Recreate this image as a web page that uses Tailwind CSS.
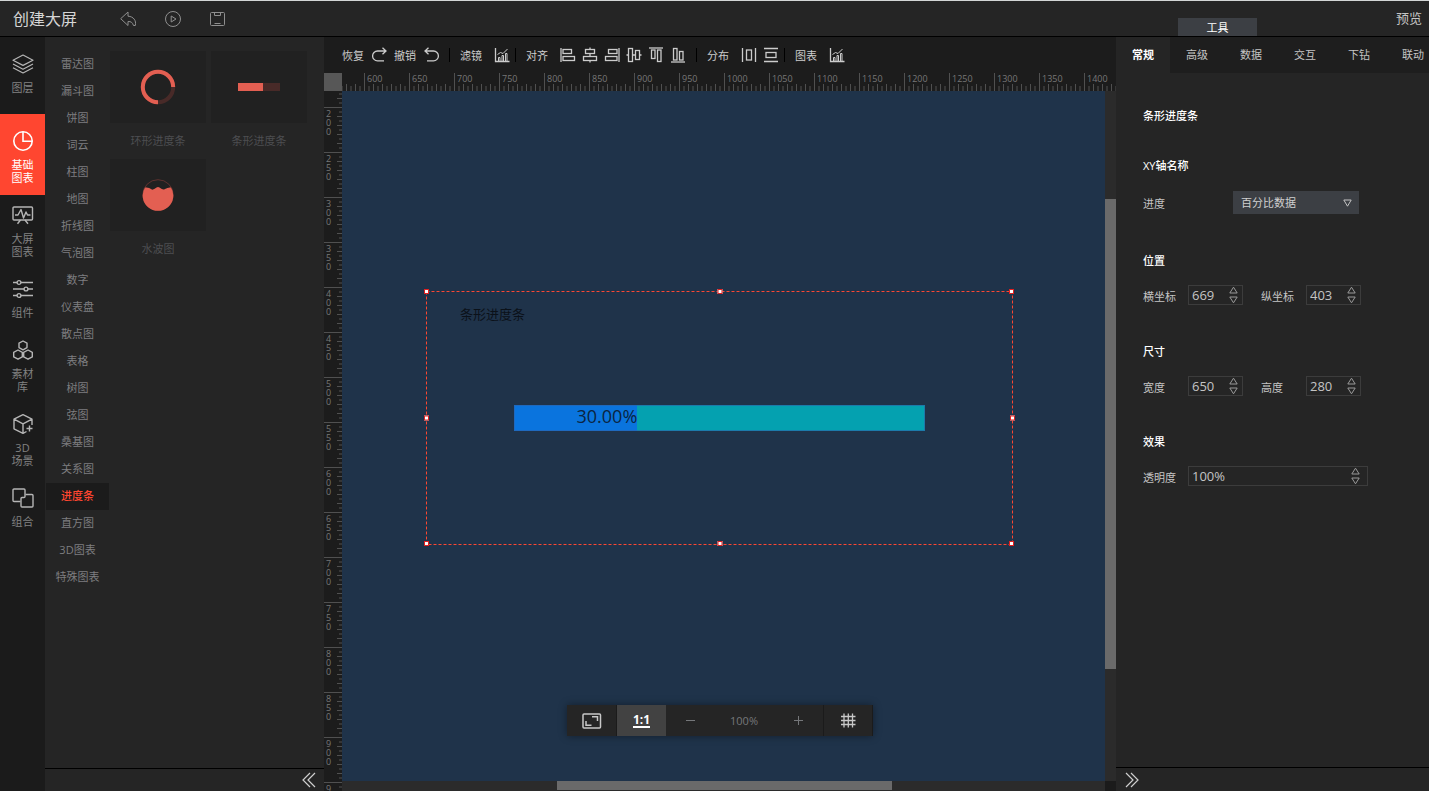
<!DOCTYPE html>
<html lang="zh-CN">
<head>
    <meta charset="UTF-8">
    <meta name="viewport" content="width=device-width, initial-scale=1.0">
    <title>创建大屏</title>
    <script src="https://cdn.jsdelivr.net/npm/@tailwindcss/browser@4"></script>
</head>
<body class="h-screen flex flex-col overflow-hidden bg-[#252525] border-t border-[#d3d6d6] text-[11px] leading-[13px] text-[#c4c4c4] font-['Open_Sans','Noto_Sans_CJK_SC',sans-serif]">
    <!-- Header -->
    <header class="h-9 shrink-0 flex items-center border-b border-black">
        <h1 class="pl-[13px] text-base leading-5 text-[#d6d6d6]">创建大屏</h1>
        <div class="flex items-center gap-[29px] pl-[43px] text-[#8f8f8f]">
            <button type="button" aria-label="返回">
                <svg class="w-4 h-4" viewBox="0 0 16 16" fill="none" stroke="currentColor" stroke-linejoin="round"><path d="M8 1 L.7 7.7 L8 14.5 V10.5 C11 10.3 12.5 11.5 13.5 14.5 H15.3 C16.5 9.5 13.5 5.5 8 5.2 Z"/></svg>
            </button>
            <button type="button" aria-label="播放">
                <svg class="w-4 h-4" viewBox="0 0 16 16" fill="none" stroke="currentColor"><circle cx="8" cy="8" r="7.5"/><path d="M6.2 5 V11 L11 8 Z" stroke-linejoin="round"/></svg>
            </button>
            <button type="button" aria-label="保存">
                <svg class="w-4 h-4" viewBox="0 0 16 16" fill="none" stroke="currentColor"><rect x=".5" y="1.5" width="14" height="13" rx="1"/><path d="M4.5 1.5 V4.5 H10.5 V1.5 M4.5 12.5 H10.5"/></svg>
            </button>
        </div>
        <button type="button" class="ml-auto mr-[139px] self-end w-[79px] h-[18px] bg-[#3c3f44] text-white">工具</button>
        <a href="#" class="pr-[7px] text-[13px]">预览</a>
    </header>

    <div class="flex-1 min-h-0 flex">
        <!-- Category rail -->
        <nav class="w-[45px] shrink-0 bg-[#1b1b1b] text-center text-[#818181]">
            <a href="#" class="flex flex-col items-center gap-[7px] pt-[17px] pb-5">
                <svg class="w-[22px] h-5 text-[#b5b5b5]" viewBox="0 0 22 20" fill="none" stroke="currentColor" stroke-width="1.2" stroke-linejoin="round"><path d="M11 1 L21 6.2 L11 11.4 L1 6.2 Z M1 10 L11 15.2 L21 10 M1 13.8 L11 19 L21 13.8"/></svg>
                <span>图层</span>
            </a>
            <a href="#" class="flex flex-col items-center gap-[7px] pt-[17px] pb-[11px] bg-[#ff4630] text-white">
                <svg class="w-[22px] h-5" viewBox="0 0 22 20" fill="none" stroke="currentColor" stroke-width="1.6"><circle cx="11" cy="10" r="9.2"/><path d="M11 .7 V10.2 H20.3"/></svg>
                <span>基础<br>图表</span>
            </a>
            <a href="#" class="flex flex-col items-center gap-[7px] pt-[10px] pb-[11px]">
                <svg class="w-[22px] h-5 text-[#b5b5b5]" viewBox="0 0 22 20" fill="none" stroke="currentColor" stroke-width="1.4" stroke-linejoin="round"><rect x="1" y="2" width="19.5" height="13" rx="1"/><path d="M3 10 H6 L9 4.5 L11.5 13 L14 7 L15.5 10 H18.5 M8.5 15 L5.5 18.8 M13 15 L16 18.8"/></svg>
                <span>大屏<br>图表</span>
            </a>
            <a href="#" class="flex flex-col items-center gap-[7px] pt-[10px] pb-[11px]">
                <svg class="w-[22px] h-5 text-[#b5b5b5]" viewBox="0 0 22 20" fill="none" stroke="currentColor" stroke-width="1.4"><path d="M1 3.5 H5 M9 3.5 H21 M1 10 H12 M16 10 H21 M1 16.5 H5 M9 16.5 H21"/><circle cx="7" cy="3.5" r="1.9"/><circle cx="14" cy="10" r="1.9"/><circle cx="7" cy="16.5" r="1.9"/></svg>
                <span>组件</span>
            </a>
            <a href="#" class="flex flex-col items-center gap-[7px] pt-[10px] pb-[11px]">
                <svg class="w-[22px] h-5 text-[#b5b5b5]" viewBox="0 0 22 20" fill="none" stroke="currentColor" stroke-width="1.4" stroke-linejoin="round"><path d="M11 1 L15 3.2 V7.6 L11 9.8 L7 7.6 V3.2 Z M6 10 L10.3 12.3 V16.9 L6 19.2 L1.7 16.9 V12.3 Z M16 10 L20.3 12.3 V16.9 L16 19.2 L11.7 16.9 V12.3 Z"/></svg>
                <span>素材<br>库</span>
            </a>
            <a href="#" class="flex flex-col items-center gap-[7px] pt-[10px] pb-[11px]">
                <svg class="w-[22px] h-5 text-[#b5b5b5]" viewBox="0 0 22 20" fill="none" stroke="currentColor" stroke-width="1.4" stroke-linejoin="round"><path d="M20 11 V5.2 L11 .7 L2 5.2 V14.8 L11 19.3 L14.5 17.5 M2 5.2 L11 9.8 L20 5.2 M11 9.8 V19.3 M17.5 11.5 V17.5 M14.5 14.5 H20.5"/></svg>
                <span>3D<br>场景</span>
            </a>
            <a href="#" class="flex flex-col items-center gap-[7px] pt-[10px] pb-[11px]">
                <svg class="w-[22px] h-5 text-[#b5b5b5]" viewBox="0 0 22 20" fill="none" stroke="currentColor" stroke-width="1.4"><path d="M8.5 13.5 H2 a1 1 0 0 1 -1 -1 V2 a1 1 0 0 1 1 -1 H12 a1 1 0 0 1 1 1 V8.5 a1 1 0 0 1 -1 1 H11"/><path d="M13.5 6.5 H20 a1 1 0 0 1 1 1 V18 a1 1 0 0 1 -1 1 H10 a1 1 0 0 1 -1 -1 V10.5 a1 1 0 0 1 1 -1 H11"/></svg>
                <span>组合</span>
            </a>
        </nav>

        <!-- Chart library -->
        <section class="w-[279px] shrink-0 flex flex-col">
            <div class="flex-1 min-h-0 flex pt-[14px] pl-px">
                <nav id="chart-types" class="w-[63px] shrink-0 text-center text-[#7e7e80]"></nav>
                <div class="grid grid-cols-[96px_96px] auto-rows-[108px] content-start gap-x-[5px] pl-px text-center text-[#4d4e51]">
                    <button type="button" class="flex flex-col">
                        <span class="w-full h-[72px] flex items-center justify-center bg-[#212121]">
                            <svg class="w-9 h-9" viewBox="0 0 36 36" fill="none" stroke-width="4"><circle cx="18" cy="18" r="15.2" stroke="#482a28"/><path d="M18 33.2 A15.2 15.2 0 1 1 33.2 18" stroke="#e35f52"/></svg>
                        </span>
                        <span class="w-full h-9 leading-9">环形进度条</span>
                    </button>
                    <button type="button" class="flex flex-col">
                        <span class="w-full h-[72px] flex items-center justify-center bg-[#212121]">
                            <svg class="w-[42px] h-2" viewBox="0 0 42 8"><path d="M0 0 H42 V8 H0 Z" fill="#482a28"/><path d="M0 0 H25 V8 H0 Z" fill="#e35f52"/></svg>
                        </span>
                        <span class="w-full h-9 leading-9">条形进度条</span>
                    </button>
                    <button type="button" class="flex flex-col">
                        <span class="w-full h-[72px] flex items-center justify-center bg-[#212121]">
                            <svg class="w-8 h-8" viewBox="0 0 32 32"><circle cx="16" cy="16" r="15.3" fill="none" stroke="#7a3a35" stroke-width=".7"/><path d="M3 9 Q7 14 12 10 H21 Q25 14 29 9 L28 14 H4 Z" fill="#7f3d38"/><path d="M3 8.5 Q7 8 9 10 Q11 11.5 13 9.5 Q16 6.5 19 9.5 Q21 11.5 23 10 Q26 8 29 8.5 A15.3 15.3 0 1 1 3 8.5 Z" fill="#e35f52"/></svg>
                        </span>
                        <span class="w-full h-9 leading-9">水波图</span>
                    </button>
                </div>
            </div>
            <footer class="h-[23px] shrink-0 flex items-center justify-end border-t border-black pr-2">
                <button type="button" aria-label="收起">
                    <svg class="w-[14px] h-4" viewBox="0 0 14 16" fill="none" stroke="#cfcfcf" stroke-width="1.2"><path d="M8 1 L1 8 L8 15 M13 1 L6 8 L13 15"/></svg>
                </button>
            </footer>
        </section>

        <!-- Editor -->
        <main class="relative flex-1 min-w-0 flex flex-col">
            <div class="h-9 shrink-0 flex items-center bg-[#1c1c1c] pl-[18px] text-[#cccccc]">
                <button type="button" class="flex items-center gap-2">恢复
                    <svg class="w-4 h-4" viewBox="0 0 16 16" fill="none" stroke="currentColor" stroke-width="1.3"><path d="M10.5 .8 L14 4 L10.5 7.2 M14 4 H5.5 A4.8 4.8 0 0 0 5.5 13.8 H12"/></svg>
                </button>
                <button type="button" class="flex items-center gap-2 ml-1.5">撤销
                    <svg class="w-4 h-4" viewBox="0 0 16 16" fill="none" stroke="currentColor" stroke-width="1.3"><path d="M4.5 .8 L1 4 L4.5 7.2 M1 4 H9.5 A4.8 4.8 0 0 1 9.5 13.8 H3"/></svg>
                </button>
                <span class="w-px h-[14px] ml-[9px] mr-[10px] bg-black"></span>
                <button type="button" class="flex items-center gap-3">滤镜
                    <svg class="w-4 h-4" viewBox="0 0 16 16" fill="none" stroke="currentColor"><path d="M1.5 1 V14.5 H15.5" stroke-width="1.3"/><path d="M4.5 14 V10.5 H6 V14 M8 14 V8.5 H9.5 V14 M11.5 14 V6.5 H13 V14 M3.5 7.5 L6.5 5.5 L9 6.5 L13.5 2"/></svg>
                </button>
                <span class="w-px h-[14px] ml-[5px] mr-[10px] bg-black"></span>
                <span>对齐</span>
                <div class="flex items-center gap-1.5 pl-3">
                    <button type="button" aria-label="左对齐">
                        <svg class="w-4 h-4" viewBox="0 0 16 16" fill="none" stroke="currentColor" stroke-width="1.3"><path d="M1 1 V15"/><rect x="3" y="2.5" width="8.5" height="4"/><rect x="3" y="9.5" width="11.5" height="4"/></svg>
                    </button>
                    <button type="button" aria-label="水平居中">
                        <svg class="w-4 h-4" viewBox="0 0 16 16" fill="none" stroke="currentColor" stroke-width="1.3"><path d="M8 .5 V2.5 M8 6.5 V9.5 M8 13.5 V15.5"/><rect x="3.5" y="2.5" width="9" height="4"/><rect x="1.5" y="9.5" width="13" height="4"/></svg>
                    </button>
                    <button type="button" aria-label="右对齐">
                        <svg class="w-4 h-4" viewBox="0 0 16 16" fill="none" stroke="currentColor" stroke-width="1.3"><path d="M15 1 V15"/><rect x="4.5" y="2.5" width="8.5" height="4"/><rect x="1.5" y="9.5" width="11.5" height="4"/></svg>
                    </button>
                    <button type="button" aria-label="垂直居中">
                        <svg class="w-4 h-4" viewBox="0 0 16 16" fill="none" stroke="currentColor" stroke-width="1.3"><path d="M.5 8 H2.5 M6.5 8 H9.5 M13.5 8 H15.5"/><rect x="2.5" y="1.5" width="4" height="13"/><rect x="9.5" y="3.5" width="4" height="9"/></svg>
                    </button>
                    <button type="button" aria-label="顶对齐">
                        <svg class="w-4 h-4" viewBox="0 0 16 16" fill="none" stroke="currentColor" stroke-width="1.3"><path d="M1 1 H15"/><rect x="3.5" y="3" width="3.5" height="8.5"/><rect x="9.5" y="3" width="3.5" height="11.5"/></svg>
                    </button>
                    <button type="button" aria-label="底对齐">
                        <svg class="w-4 h-4" viewBox="0 0 16 16" fill="none" stroke="currentColor" stroke-width="1.3"><path d="M1 15 H15"/><rect x="3.5" y="1.5" width="3.5" height="11.5"/><rect x="9.5" y="4.5" width="3.5" height="8.5"/></svg>
                    </button>
                </div>
                <span class="w-px h-[14px] mx-[10px] bg-black"></span>
                <span>分布</span>
                <div class="flex items-center gap-1.5 pl-3">
                    <button type="button" aria-label="水平分布">
                        <svg class="w-4 h-4" viewBox="0 0 16 16" fill="none" stroke="currentColor" stroke-width="1.3"><path d="M1.5 1 V15 M14.5 1 V15"/><rect x="5.5" y="3" width="5" height="10"/></svg>
                    </button>
                    <button type="button" aria-label="垂直分布">
                        <svg class="w-4 h-4" viewBox="0 0 16 16" fill="none" stroke="currentColor" stroke-width="1.3"><path d="M1 1.5 H15 M1 14.5 H15"/><rect x="3" y="5.5" width="10" height="5"/></svg>
                    </button>
                </div>
                <span class="w-px h-[14px] ml-[5px] mr-[10px] bg-black"></span>
                <button type="button" class="flex items-center gap-3">图表
                    <svg class="w-4 h-4" viewBox="0 0 16 16" fill="none" stroke="currentColor"><path d="M1.5 1 V14.5 H15.5" stroke-width="1.3"/><path d="M4.5 14 V10.5 H6 V14 M8 14 V8.5 H9.5 V14 M11.5 14 V6.5 H13 V14 M3.5 7.5 L6.5 5.5 L9 6.5 L13.5 2"/></svg>
                </button>
            </div>

            <!-- Horizontal ruler -->
            <div class="h-[18px] shrink-0 flex bg-[#1c1c1c]">
                <div class="w-[18px] shrink-0 bg-[#575757]"></div>
                <div class="flex-1 min-w-0 overflow-hidden">
                    <div id="ruler-x" class="flex -ml-[23px] text-[9px] leading-[11px] text-[#777777]"></div>
                </div>
            </div>

            <div class="flex-1 min-h-0 flex">
                <!-- Vertical ruler -->
                <div class="w-[18px] shrink-0 overflow-hidden bg-[#1c1c1c]">
                    <div id="ruler-y" class="-mt-[29px] text-[9px] leading-[9px] text-[#777777]"></div>
                </div>

                <div class="flex-1 min-w-0 flex flex-col">
                    <div class="flex-1 min-h-0 flex">
                        <div class="relative flex-1 bg-[#1f334a] overflow-hidden">
                            <div class="absolute left-[84px] top-[200px] w-[587px] h-[254px]">
                                <svg class="absolute inset-0 w-full h-full" viewBox="0 0 587 254" fill="none"><rect x=".5" y=".5" width="586" height="253" stroke="#fb4732" stroke-dasharray="3 2"/></svg>
                                <p class="absolute left-[34px] top-4 text-[13px] leading-[15px] text-[#0b1119]">条形进度条</p>
                                <div class="absolute left-[88px] top-[114px] w-[411px] h-[26px] flex bg-[#04a1b0] outline -outline-offset-1 outline-[#2d62a8]/60">
                                    <div class="h-full bg-[#0a74de] text-right text-lg leading-[22px] text-[#0b2542]" style="width: 30%">30.00%</div>
                                </div>
                                <div id="handles"></div>
                            </div>
                        </div>
                        <div class="w-[11px] shrink-0 bg-[#2b2b2b] pt-[108px]">
                            <div class="h-[470px] bg-[#6a6a6a]"></div>
                        </div>
                    </div>
                    <div class="h-[10px] shrink-0 flex bg-[#1b1b1b]">
                        <div class="flex-1 bg-[#2b2b2b] pl-[215px]">
                            <div class="w-[335px] h-[9px] bg-[#6a6a6a]"></div>
                        </div>
                        <div class="w-[11px] shrink-0"></div>
                    </div>
                </div>
            </div>

            <!-- Zoom bar -->
            <div class="absolute bottom-[55px] left-1/2 -translate-x-1/2 flex h-[31px] bg-[#252525] text-[#75777a] shadow-[0_0_8px_rgba(0,0,0,0.4)]">
                <button type="button" class="w-[50px] flex items-center justify-center border-r border-[#1b1b1b]" aria-label="适应屏幕">
                    <svg class="w-5 h-4" viewBox="0 0 20 16" fill="none" stroke="#c8c8c8" stroke-width="1.5"><rect x="1" y="1" width="17.5" height="14" rx="1"/><path d="M10 3.7 H15.5 V8 M4 8 V12.3 H9.5"/></svg>
                </button>
                <button type="button" class="w-[49px] flex items-center justify-center bg-[#424242] text-white">
                    <span class="border-b-2 border-white text-xs leading-3 font-bold">1:1</span>
                </button>
                <button type="button" class="w-12 flex items-center justify-center" aria-label="缩小">
                    <svg class="w-[9px] h-[9px]" viewBox="0 0 9 9" stroke="currentColor"><path d="M0 4.5 H9"/></svg>
                </button>
                <span class="w-[60px] leading-[31px] text-center">100%</span>
                <button type="button" class="w-[50px] flex items-center justify-center border-r border-[#1b1b1b]" aria-label="放大">
                    <svg class="w-[9px] h-[9px]" viewBox="0 0 9 9" stroke="currentColor"><path d="M0 4.5 H9 M4.5 0 V9"/></svg>
                </button>
                <button type="button" class="w-[49px] flex items-center justify-center border-r border-[#1b1b1b]" aria-label="网格">
                    <svg class="w-4 h-4" viewBox="0 0 16 16" stroke="#c8c8c8" stroke-width="1.3"><path d="M1 3.5 H15.5 M1 7.5 H15.5 M1 11.5 H15.5 M4 .5 V14.5 M8.3 .5 V14.5 M12.5 .5 V14.5"/></svg>
                </button>
            </div>
        </main>

        <!-- Properties -->
        <aside class="w-[313px] shrink-0 flex flex-col">
            <div class="h-9 shrink-0 flex overflow-hidden bg-[#1e1e1e]">
                <button type="button" class="w-[54px] shrink-0 pb-0.5 bg-[#252525] font-bold text-white">常规</button>
                <button type="button" class="w-[54px] shrink-0 pb-0.5">高级</button>
                <button type="button" class="w-[54px] shrink-0 pb-0.5">数据</button>
                <button type="button" class="w-[54px] shrink-0 pb-0.5">交互</button>
                <button type="button" class="w-[54px] shrink-0 pb-0.5">下钻</button>
                <button type="button" class="w-[54px] shrink-0 pb-0.5">联动</button>
            </div>

            <form class="flex-1 min-h-0 pl-[27px] pt-9">
                <h2 class="font-medium text-white">条形进度条</h2>

                <h2 class="mt-[37px] font-medium text-white">XY轴名称</h2>
                <div class="mt-[18px] h-6 flex items-center">
                    <label for="progress" class="w-[90px] pt-0.5">进度</label>
                    <div class="relative">
                        <select id="progress" class="appearance-none w-[126px] h-[23px] px-2 bg-[#3c3f44] text-[#d0d0d0]">
                            <option>百分比数据</option>
                        </select>
                        <svg class="absolute right-[7px] top-2 w-[9px] h-2 pointer-events-none" viewBox="0 0 9 8" fill="none" stroke="#c4c4c4"><path d="M.8 1 H8.2 L4.5 7.2 Z"/></svg>
                    </div>
                </div>

                <h2 class="mt-10 font-medium text-white">位置</h2>
                <div class="mt-[18px] h-5 flex items-center">
                    <label for="pos-x" class="w-[45px] pt-0.5">横坐标</label>
                    <div class="stepper relative w-[55px]"><input id="pos-x" type="text" value="669" class="w-full h-5 px-[3px] border border-[#3c3c3c] text-[13px]"></div>
                    <label for="pos-y" class="w-[45px] ml-[18px] pt-0.5">纵坐标</label>
                    <div class="stepper relative w-[55px]"><input id="pos-y" type="text" value="403" class="w-full h-5 px-[3px] border border-[#3c3c3c] text-[13px]"></div>
                </div>

                <h2 class="mt-10 font-medium text-white">尺寸</h2>
                <div class="mt-[18px] h-5 flex items-center">
                    <label for="width" class="w-[45px] pt-0.5">宽度</label>
                    <div class="stepper relative w-[55px]"><input id="width" type="text" value="650" class="w-full h-5 px-[3px] border border-[#3c3c3c] text-[13px]"></div>
                    <label for="height" class="w-[45px] ml-[18px] pt-0.5">高度</label>
                    <div class="stepper relative w-[55px]"><input id="height" type="text" value="280" class="w-full h-5 px-[3px] border border-[#3c3c3c] text-[13px]"></div>
                </div>

                <h2 class="mt-[39px] font-medium text-white">效果</h2>
                <div class="mt-[18px] h-5 flex items-center">
                    <label for="opacity" class="w-[45px] pt-0.5">透明度</label>
                    <div class="stepper relative w-[180px]"><input id="opacity" type="text" value="100%" class="w-full h-5 px-[3px] border border-[#3c3c3c] text-[13px]"></div>
                </div>
            </form>

            <footer class="h-6 shrink-0 flex items-center border-t border-black pl-[9px]">
                <button type="button" aria-label="收起">
                    <svg class="w-[14px] h-4" viewBox="0 0 14 16" fill="none" stroke="#cfcfcf" stroke-width="1.2"><path d="M1 1 L8 8 L1 15 M6 1 L13 8 L6 15"/></svg>
                </button>
            </footer>
        </aside>
    </div>

    <script>
        // Chart type menu
        const chartTypes = ['雷达图', '漏斗图', '饼图', '词云', '柱图', '地图', '折线图', '气泡图', '数字', '仪表盘', '散点图', '表格', '树图', '弦图', '桑基图', '关系图', '进度条', '直方图', '3D图表', '特殊图表'];
        document.getElementById('chart-types').innerHTML = chartTypes.map(name => {
            const state = name === '进度条' ? 'bg-[#1b1b1b] font-medium text-[#ff4630]' : '';
            return `<a href="#" class="block h-[27px] leading-[25px] ${state}">${name}</a>`;
        }).join('');

        // Rulers: one 45px cell for every 50 units, ten ticks in each
        function ticks(vertical) {
            let d = '';
            for (let i = 1; i < 10; i++) {
                const at = i * 4.5 + 0.5;
                const len = vertical ? (i % 2 ? 3 : 5) : (i % 2 ? 5 : 7);
                d += vertical ? `M${18 - len} ${at}H18` : `M${at} ${18 - len}V18`;
            }
            return d;
        }

        // The first cell of each ruler starts outside the view, so it has no label
        let rulerX = '';
        for (let n = 550; n <= 1400; n += 50) {
            rulerX += `
                <div class="relative w-[45px] h-[18px] shrink-0 pl-[3px]">
                    <svg class="absolute inset-0 w-[45px] h-[18px]" viewBox="0 0 45 18" stroke="#505050"><path d="M.5 0V18"/><path d="${ticks(false)}"/></svg>
                    ${n > 550 ? `<span class="block">${n}</span>` : ''}
                </div>`;
        }
        document.getElementById('ruler-x').innerHTML = rulerX;

        let rulerY = '';
        for (let n = 150; n <= 950; n += 50) {
            const digits = n > 150 ? String(n).split('').map(c => `<span class="block">${c}</span>`).join('') : '';
            rulerY += `
                <div class="relative w-[18px] h-[45px] pl-[2px] pt-0.5">
                    <svg class="absolute inset-0 w-[18px] h-[45px]" viewBox="0 0 18 45" stroke="#505050"><path d="M0 .5H18"/><path d="${ticks(true)}"/></svg>
                    ${digits}
                </div>`;
        }
        document.getElementById('ruler-y').innerHTML = rulerY;

        // Resize handles
        const places = ['-left-0.5 -top-0.5', 'left-1/2 -translate-x-1/2 -top-0.5', '-right-px -top-0.5', '-left-0.5 top-1/2 -translate-y-1/2', '-right-0.5 top-1/2 -translate-y-1/2', '-left-0.5 -bottom-px', 'left-1/2 -translate-x-1/2 -bottom-px', '-right-px -bottom-px'];
        document.getElementById('handles').innerHTML = places
            .map(place => `<span class="absolute ${place} w-[5px] h-[5px] bg-white border border-[#e02020]"></span>`)
            .join('');

        // Up and down arrows of the number boxes
        document.querySelectorAll('.stepper').forEach(box => {
            const side = box.querySelector('#opacity') ? 'right-2' : 'right-[5px]';
            box.insertAdjacentHTML('beforeend', `
                <span class="absolute ${side} top-px flex flex-col gap-0.5 text-[#9a9a9a]">
                    <button type="button" class="block h-2" aria-label="增加"><svg class="w-[9px] h-2" viewBox="0 0 9 8" fill="none" stroke="currentColor"><path d="M.8 7 H8.2 L4.5 1.2 Z"/></svg></button>
                    <button type="button" class="block h-2" aria-label="减少"><svg class="w-[9px] h-2" viewBox="0 0 9 8" fill="none" stroke="currentColor"><path d="M.8 1 H8.2 L4.5 6.8 Z"/></svg></button>
                </span>`);
        });
    </script>
</body>
</html>
